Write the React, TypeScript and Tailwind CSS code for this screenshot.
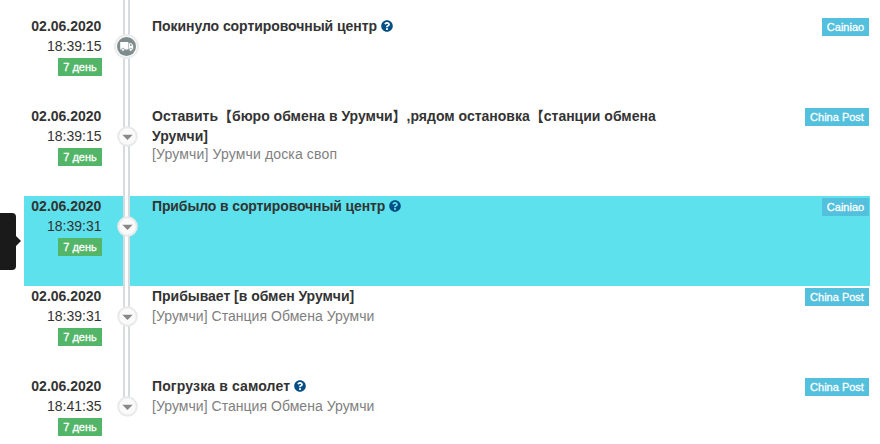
import { FaQuestionCircle } from "react-icons/fa";
import clsx from "clsx";

type TrackingEvent = {
  time: string;
  title: string[];
  titleClass?: string;
  detail?: string;
  detailClass?: string;
  carrier: string;
  hint?: boolean;
  highlighted?: boolean;
};

const events: TrackingEvent[] = [
  {
    time: "18:39:15",
    title: ["Покинуло сортировочный центр"],
    titleClass: "tracking-[-0.06px]",
    carrier: "Cainiao",
    hint: true,
  },
  {
    time: "18:39:15",
    title: ["Оставить【бюро обмена в Урумчи】,рядом остановка【станции обмена", "Урумчи]"],
    detail: "[Урумчи] Урумчи доска своп",
    detailClass: "tracking-[0.15px]",
    carrier: "China Post",
  },
  {
    time: "18:39:31",
    title: ["Прибыло в сортировочный центр"],
    titleClass: "tracking-[-0.12px]",
    carrier: "Cainiao",
    hint: true,
    highlighted: true,
  },
  {
    time: "18:39:31",
    title: ["Прибывает [в обмен Урумчи]"],
    titleClass: "tracking-[-0.03px]",
    detail: "[Урумчи] Станция Обмена Урумчи",
    detailClass: "tracking-[0.04px]",
    carrier: "China Post",
  },
  {
    time: "18:41:35",
    title: ["Погрузка в самолет"],
    titleClass: "tracking-[0.13px]",
    detail: "[Урумчи] Станция Обмена Урумчи",
    detailClass: "tracking-[0.04px]",
    carrier: "China Post",
    hint: true,
  },
];

function TruckMarker() {
  return (
    <svg className="absolute top-[18px] left-[-9px] size-[25px]" viewBox="0 0 25 25">
      <circle cx="12.5" cy="12.5" r="12.5" fill="#ececec" />
      <circle cx="12.5" cy="12.5" r="10.6" fill="#f8f8f8" />
      <circle cx="12.5" cy="12.5" r="9.5" fill="#7f8c8d" />
      <path fill="#fff" d="M6.2 8h8.2v7.4H6.2zM14.9 9.2h2.6l1.7 2.3v3.9h-4.3z" />
      <path fill="#7f8c8d" d="M16 10.3h1.1l1 1.5H16z" />
      <circle cx="9" cy="15.7" r="1.5" fill="#fff" stroke="#7f8c8d" strokeWidth=".7" />
      <circle cx="16.8" cy="15.7" r="1.5" fill="#fff" stroke="#7f8c8d" strokeWidth=".7" />
    </svg>
  );
}

function ArrowMarker() {
  return (
    <svg className="absolute top-[20px] left-[-6.5px] size-[21px]" viewBox="0 0 21 21">
      <circle cx="10.5" cy="10.5" r="9.3" fill="#fafafa" stroke="#e9e9e9" strokeWidth="2" />
      <path fill="#888" d="M5.3 8.7h10.4l-5.2 5.2z" />
    </svg>
  );
}

function EventRow({ event, first, last }: { event: TrackingEvent; first: boolean; last: boolean }) {
  return (
    <li className={clsx("flex h-[90px]", event.highlighted && "bg-[#5ce1ed]")}>
      <div className="flex w-[78px] shrink-0 flex-col items-end">
        <b className="pr-[0.6px]">02.06.2020</b>
        <span className="pr-[0.5px]">{event.time}</span>
        <span className="mt-[2px] flex h-[18px] w-[44px] items-center justify-center bg-[#53b567] text-[11px] text-white [-webkit-text-stroke:0.3px_white]">
          7 день
        </span>
      </div>
      <div className="relative ml-[21px] w-[7px] shrink-0">
        <div
          className={clsx(
            "border-x-2 border-[#d6dbdf] bg-white",
            first && "-mt-4 h-[106px]",
            last && "h-[22px]",
            !first && !last && "h-full",
          )}
        />
        {first ? <TruckMarker /> : <ArrowMarker />}
      </div>
      <div className="ml-[22px] grow whitespace-nowrap">
        {event.title.map((line) => (
          <div key={line} className="flex h-5 items-center font-bold">
            <span className={event.titleClass}>{line}</span>
            {event.hint && <FaQuestionCircle className="ml-[4px] size-3 text-[#034f84]" />}
          </div>
        ))}
        {event.detail && (
          <div className={clsx("text-[#808080]", event.title.length > 1 && "-mt-[2px]")}>
            <span className={event.detailClass}>{event.detail}</span>
          </div>
        )}
      </div>
      <span
        className={clsx(
          "mt-[2px] mr-px flex h-[18px] shrink-0 items-center justify-center bg-[#53c0de] text-[11px] text-white [-webkit-text-stroke:0.3px_white]",
          event.carrier === "Cainiao" ? "w-[47px]" : "w-[64px]",
        )}
      >
        {event.carrier}
      </span>
    </li>
  );
}

export default function App() {
  return (
    <main className="relative h-[444px] w-[880px] overflow-hidden bg-white pt-4 pr-[10px] pl-6 font-['Liberation_Sans','Noto_Sans_CJK_SC',sans-serif] text-[14px] leading-5 text-[#333]">
      <ul>
        {events.map((event, i) => (
          <EventRow key={i} event={event} first={i === 0} last={i === events.length - 1} />
        ))}
      </ul>
      <div className="absolute top-[213px] left-0 h-[57px] w-4 rounded-r-[4px] bg-[#1a1a1a]" />
      <div className="absolute top-[236px] left-4 border-y-[5px] border-l-[5px] border-y-transparent border-l-[#1a1a1a]" />
    </main>
  );
}
